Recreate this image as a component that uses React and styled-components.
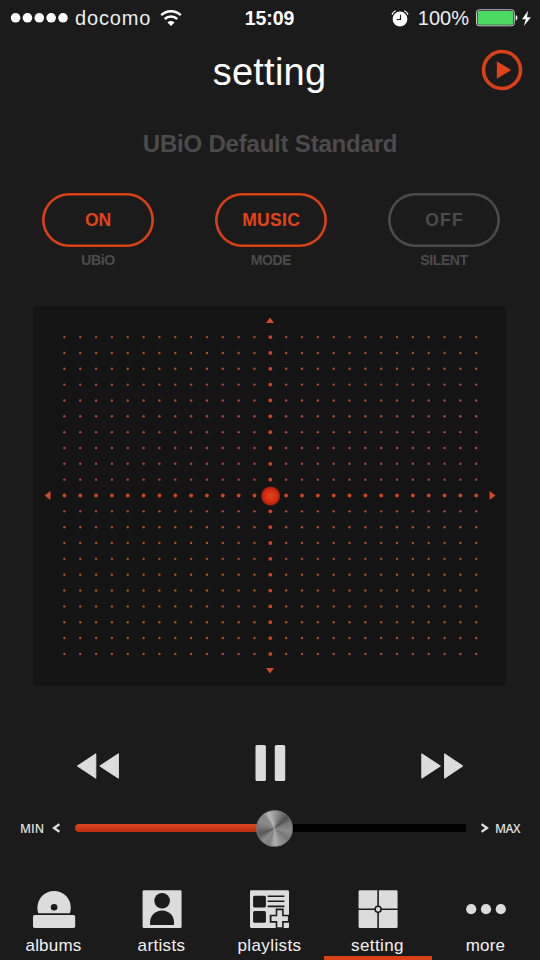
import React, { useState } from "react";
import styled, { createGlobalStyle } from "styled-components";

const GlobalStyle = createGlobalStyle`
  * {
    box-sizing: border-box;
  }

  body {
    margin: 0;
    background: #1b1b1b;
    color: #fff;
    font-family: "Liberation Sans", Arial, sans-serif;
  }

  button {
    padding: 0;
    border: 0;
    background: none;
    color: inherit;
    font: inherit;
    cursor: pointer;
  }

  svg {
    display: block;
    flex: none;
  }
`;

// Phone screen
const Screen = styled.main`
  display: flex;
  flex-direction: column;
  width: 540px;
  height: 960px;
  overflow: hidden;
  background: #1b1b1b;
`;

// Status bar
const StatusBar = styled.div`
  display: grid;
  grid-template-columns: 1fr auto 1fr;
  align-items: center;
  height: 36px;
  padding: 0 8px 0 10px;
  font-size: 20px;
`;

const StatusGroup = styled.div`
  display: flex;
  align-items: center;
  justify-content: ${(props) => (props.$end ? "flex-end" : "flex-start")};
`;

const Carrier = styled.span`
  margin: 0 9px 0 6px;
  color: #eee;
  letter-spacing: 0.85px;
`;

const Clock = styled.span`
  padding-right: 3px;
  font-weight: bold;
  font-size: 19.5px;
  letter-spacing: -0.1px;
`;

const BatteryLevel = styled.span`
  margin: 0 7px 0 9px;
  color: #eee;
`;

// Header
const Header = styled.header`
  display: grid;
  grid-template-columns: 1fr auto 1fr;
  align-items: center;
  height: 68px;
  padding: 0 17px 0 16px;
`;

const Title = styled.h1`
  grid-column: 2;
  margin: 4px 0 0;
  font-size: 38px;
  font-weight: normal;
  line-height: 44px;
  letter-spacing: 0.25px;
`;

const PlayButton = styled.button`
  justify-self: end;
`;

const PresetName = styled.h2`
  margin: 26px 0 0;
  color: #4b4b4b;
  font-size: 24px;
  line-height: 28px;
  text-align: center;
  letter-spacing: -0.2px;
`;

// Mode switches
const SwitchRow = styled.section`
  display: flex;
  justify-content: space-between;
  padding: 0 40px 0 42px;
  margin-top: 35px;
`;

const SwitchItem = styled.div`
  display: flex;
  flex-direction: column;
  align-items: center;
`;

const Pill = styled.button`
  width: 112px;
  height: 54px;
  box-shadow: inset 0 0 0 2.6px ${(props) => (props.$active ? "#d94018" : "#4b4b4b")};
  border-radius: 27px;
  color: ${(props) => (props.$active ? "#e2431b" : "#4b4b4b")};
  font-size: 17.5px;
  font-weight: bold;
  letter-spacing: ${(props) => props.$spacing || "0"};
  text-indent: ${(props) => props.$spacing || "0"};
  line-height: 54px;
`;

const SwitchLabel = styled.span`
  margin-top: 5px;
  color: #4b4b4b;
  font-size: 14px;
  font-weight: bold;
  line-height: 16px;
  letter-spacing: -0.35px;
`;

// Sound pad
const Pad = styled.section`
  width: 473px;
  height: 380px;
  margin: 38px 0 0 33px;
  border-radius: 3px;
  background: #141414;
`;

// Playback controls
const Controls = styled.section`
  display: flex;
  align-items: center;
  justify-content: space-between;
  height: 40px;
  margin-top: 57px;
  padding: 0 76px;
`;

const SkipButton = styled.button`
  padding-top: 5px;
`;

// Volume
const VolumeRow = styled.section`
  display: flex;
  align-items: center;
  height: 40px;
  margin-top: 25px;
  padding: 0 19px 0 20px;
`;

const VolumeLabel = styled.span`
  width: 32px;
  padding-left: ${(props) => (props.$end ? "6px" : "0")};
  color: #ddd;
  font-family: "Open Sans", sans-serif;
  font-size: 12px;
  font-weight: 600;
  letter-spacing: ${(props) => props.$spacing};
`;

const Track = styled.div`
  display: flex;
  align-items: center;
  width: 391px;
  height: 8px;
  margin: 0 15px;
  border-radius: 4px 0 0 4px;
  background: #000;
`;

const TrackFill = styled.div`
  height: 8px;
  border-radius: 4px 0 0 4px;
  background: linear-gradient(#df461f, #b92f12);
`;

const Knob = styled.div`
  flex: none;
  width: 37px;
  height: 37px;
  margin-left: -19px;
  border: 1px solid #777;
  border-radius: 50%;
  background: conic-gradient(
    #999 0deg,
    #777 25deg,
    #505050 48deg,
    #777 70deg,
    #8c8c8c 100deg,
    #777 125deg,
    #8c8c8c 150deg,
    #b0b0b0 178deg,
    #808080 200deg,
    #8c8c8c 222deg,
    #585858 248deg,
    #777 275deg,
    #8c8c8c 300deg,
    #888 320deg,
    #b8b8b8 338deg,
    #999 360deg
  );
`;

// Bottom tabs
const TabBar = styled.nav`
  display: grid;
  grid-template-columns: repeat(5, 1fr);
  height: 78px;
  margin-top: auto;
`;

const Tab = styled.button`
  display: flex;
  flex-direction: column;
  align-items: center;
  padding-top: 7px;
  border-bottom: 4px solid ${(props) => (props.$active ? "#d94018" : "transparent")};
`;

const TabLabel = styled.span`
  margin-top: 7px;
  padding-right: 1px;
  color: #f2f2f2;
  font-size: 17px;
  line-height: 20px;
  letter-spacing: ${(props) => props.$spacing};
`;

const COLUMNS = 27;
const ROWS = 21;
const STEP = 15.84;

const SignalDots = () => (
  <svg width="59" height="12" fill="#fff">
    {[0, 1, 2, 3, 4].map((i) => (
      <circle key={i} cx={5.6 + i * 11.85} cy="5.8" r="4.8" />
    ))}
  </svg>
);

const WifiIcon = () => (
  <svg width="22" height="17" viewBox="0 0 22 17" fill="none" stroke="#fff" strokeWidth="2.5">
    <path d="M1.2 5.2a14.2 14.2 0 0 1 19.6 0" />
    <path d="M4.7 9a9.2 9.2 0 0 1 12.6 0" />
    <path d="M11 16l-3.5-3.5a5.1 5.1 0 0 1 7 0z" fill="#fff" stroke="none" />
  </svg>
);

const AlarmIcon = () => (
  <svg width="18" height="17" viewBox="0 0 18 17">
    <circle cx="9" cy="9" r="7.4" fill="#fff" />
    <path
      d="M1.2 4.3Q2 1.8 4.3 1M16.8 4.3Q16 1.8 13.7 1"
      fill="none"
      stroke="#fff"
      strokeWidth="1.3"
      strokeLinecap="round"
    />
    <path d="M9.5 4.8v4.7H5.7" fill="none" stroke="#1b1b1b" strokeWidth="1.2" />
  </svg>
);

const BatteryIcon = () => (
  <svg width="42" height="18" viewBox="0 0 42 18">
    <rect x=".5" y=".8" width="37.8" height="16" rx="2.6" fill="none" stroke="#ccc" />
    <rect x="1.6" y="1.9" width="35.6" height="13.8" rx="1.4" fill="#4cd964" />
    <path d="M39.7 6c2.4 1 2.4 4.7 0 5.7z" fill="#fff" />
  </svg>
);

const BoltIcon = () => (
  <svg width="14" height="17" viewBox="-3 0 14 17">
    <path d="M7 .7 1 9.2h3.8L2.8 16 10 7.2H6z" fill="#fff" />
  </svg>
);

const PlayIcon = () => (
  <svg width="42" height="42" viewBox="0 0 42 42">
    <circle cx="21" cy="21" r="18.5" fill="none" stroke="#d94018" strokeWidth="3.6" />
    <path d="M15.8 12.3v17.5L30.2 21z" fill="#e2431b" />
  </svg>
);

const SoundGrid = () => {
  const dots = [];
  for (let row = 0; row < ROWS; row++) {
    for (let col = 0; col < COLUMNS; col++) {
      const onAxis = row === 10 || col === 13;
      dots.push(
        <circle
          key={`${row}-${col}`}
          cx={31.4 + col * STEP}
          cy={31.1 + row * STEP}
          r={onAxis ? 1.9 : 1.2}
          fill={onAxis ? "#d04325" : "#b04c30"}
        />
      );
    }
  }

  return (
    <svg width="473" height="380">
      <defs>
        <radialGradient id="handle">
          <stop offset="0" stopColor="#e04717" />
          <stop offset=".65" stopColor="#d42c15" />
          <stop offset="1" stopColor="#a81d0d" />
        </radialGradient>
      </defs>
      {dots}
      <g fill="#d4472a">
        <path d="M237 11.5l4 5.5h-8z" />
        <path d="M237 367.5l4-5.5h-8z" />
        <path d="M11.5 189.5l6-4.5v9z" />
        <path d="M462.5 189.5l-6-4.5v9z" />
      </g>
      <circle cx="237.6" cy="190" r="9.4" fill="url(#handle)" />
    </svg>
  );
};

const RewindIcon = () => (
  <svg width="44" height="28" viewBox="0 0 44 28" fill="#dcdcdc" stroke="#dcdcdc" strokeLinejoin="round">
    <path d="M1.4 14 19.8 1.8v24.4zM23.8 14 42.4 1.8v24.4z" />
  </svg>
);

const ForwardIcon = () => (
  <svg width="44" height="28" viewBox="0 0 44 28" fill="#dcdcdc" stroke="#dcdcdc" strokeLinejoin="round">
    <path d="M20.4 14 1.8 1.8v24.4zM42.8 14 24.6 1.8v24.4z" />
  </svg>
);

const PauseIcon = () => (
  <svg width="32" height="38" viewBox="0 0 32 38" fill="#dcdcdc">
    <rect x="1.5" y="1" width="10.4" height="36" rx="1.6" />
    <rect x="20.8" y="1" width="10.4" height="36" rx="1.6" />
  </svg>
);

const Chevron = ({ right }) => (
  <svg width="8" height="10" viewBox="0 0 8 10" fill="none" stroke="#ddd" strokeWidth="2.3">
    <path d={right ? "M.6 1.2 6 5 .6 8.8" : "M7.4 1.2 2 5l5.4 3.8"} />
  </svg>
);

const AlbumsIcon = () => (
  <svg width="44" height="40" viewBox="0 0 44 40" fill="#dcdcdc">
    <path d="M6.4 24.3C5.7 22.6 5.4 21 5.4 18.6a16.7 16.7 0 0 1 33.4 0c0 2-.3 4-1 5.7z" />
    <circle cx="22.1" cy="18.3" r="3.3" fill="#1b1b1b" />
    <rect x="1" y="26" width="42.2" height="13" rx="1.8" />
  </svg>
);

const ArtistsIcon = () => (
  <svg width="40" height="40" viewBox="0 0 40 40">
    <rect x=".6" y="1.3" width="39" height="37.8" rx="1.4" fill="#dcdcdc" />
    <circle cx="20.1" cy="11.7" r="7.8" fill="#1b1b1b" />
    <path d="M8.1 36v-3c0-6.6 5.4-11.6 12-11.6S32 26.4 32 33v3z" fill="#1b1b1b" />
  </svg>
);

const PlaylistsIcon = () => (
  <svg width="40" height="40" viewBox="0 0 40 40">
    <rect x="0" y="1.3" width="39" height="37.6" rx="1.4" fill="#dcdcdc" />
    <g fill="#1b1b1b">
      <rect x="3.1" y="6.8" width="12.8" height="11.8" rx="1.5" />
      <rect x="3.1" y="21.9" width="12.8" height="11.8" rx="1.5" />
    </g>
    <path d="M17.6 7.3h16.8M17.6 12.3h16.8M17.6 17.4h16.8" stroke="#1b1b1b" strokeWidth="1.6" />
    <path d="M29.7 19.5V40M19.7 29.7H40" stroke="#1b1b1b" strokeWidth="8" />
    <path d="M29.7 21.3v16.9M21.5 29.7h16.4" stroke="#dcdcdc" strokeWidth="4.8" />
    <path d="M35.5 38.9v-3.4H39v2a1.4 1.4 0 0 1-1.4 1.4z" fill="#dcdcdc" />
  </svg>
);

const SettingIcon = () => (
  <svg width="40" height="40" viewBox="0 0 40 40">
    <rect x=".6" y="1.3" width="39" height="37.8" rx="1.4" fill="#dcdcdc" />
    <path d="M20.1 1v38.5M0 20.2h40" stroke="#1b1b1b" strokeWidth="1.6" />
    <circle cx="20.1" cy="20.2" r="3" fill="#dcdcdc" stroke="#1b1b1b" strokeWidth="1.6" />
  </svg>
);

const MoreIcon = () => (
  <svg width="40" height="40" viewBox="0 0 40 40" fill="#dcdcdc">
    <circle cx="5.2" cy="20.2" r="5.1" />
    <circle cx="20" cy="20.2" r="5.1" />
    <circle cx="34.8" cy="20.2" r="5.1" />
  </svg>
);

const tabs = [
  { name: "albums", icon: <AlbumsIcon />, spacing: "0.2px" },
  { name: "artists", icon: <ArtistsIcon />, spacing: "0.35px" },
  { name: "playlists", icon: <PlaylistsIcon />, spacing: "0.4px" },
  { name: "setting", icon: <SettingIcon />, spacing: "0.4px" },
  { name: "more", icon: <MoreIcon />, spacing: "0.2px" },
];

const App = () => {
  const [activeTab, setActiveTab] = useState("setting");
  const volume = 200;

  return (
    <>
      <GlobalStyle />
      <Screen>
        <StatusBar>
          <StatusGroup>
            <SignalDots />
            <Carrier>docomo</Carrier>
            <WifiIcon />
          </StatusGroup>
          <Clock>15:09</Clock>
          <StatusGroup $end>
            <AlarmIcon />
            <BatteryLevel>100%</BatteryLevel>
            <BatteryIcon />
            <BoltIcon />
          </StatusGroup>
        </StatusBar>

        <Header>
          <Title>setting</Title>
          <PlayButton aria-label="Play">
            <PlayIcon />
          </PlayButton>
        </Header>

        <PresetName>UBiO Default Standard</PresetName>

        <SwitchRow>
          <SwitchItem>
            <Pill $active>ON</Pill>
            <SwitchLabel>UBiO</SwitchLabel>
          </SwitchItem>
          <SwitchItem>
            <Pill $active $spacing="0.3px">MUSIC</Pill>
            <SwitchLabel>MODE</SwitchLabel>
          </SwitchItem>
          <SwitchItem>
            <Pill $spacing="1.2px">OFF</Pill>
            <SwitchLabel>SILENT</SwitchLabel>
          </SwitchItem>
        </SwitchRow>

        <Pad>
          <SoundGrid />
        </Pad>

        <Controls>
          <SkipButton aria-label="Previous">
            <RewindIcon />
          </SkipButton>
          <button aria-label="Pause">
            <PauseIcon />
          </button>
          <SkipButton aria-label="Next">
            <ForwardIcon />
          </SkipButton>
        </Controls>

        <VolumeRow>
          <VolumeLabel $spacing="0">MIN</VolumeLabel>
          <Chevron />
          <Track>
            <TrackFill style={{ width: volume }} />
            <Knob />
          </Track>
          <Chevron right />
          <VolumeLabel $end $spacing="-0.5px">MAX</VolumeLabel>
        </VolumeRow>

        <TabBar>
          {tabs.map((tab) => (
            <Tab key={tab.name} $active={tab.name === activeTab} onClick={() => setActiveTab(tab.name)}>
              {tab.icon}
              <TabLabel $spacing={tab.spacing}>{tab.name}</TabLabel>
            </Tab>
          ))}
        </TabBar>
      </Screen>
    </>
  );
};

export default App;
